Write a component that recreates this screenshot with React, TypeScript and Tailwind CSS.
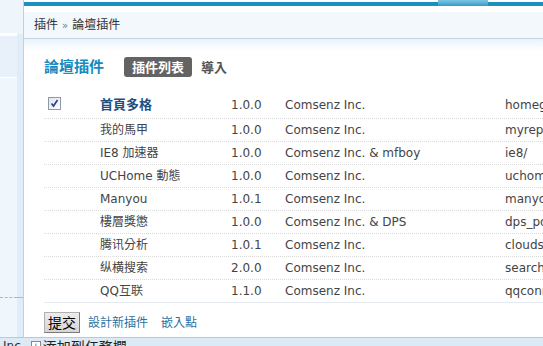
import React from "react";

const rows = [
  { name: "首頁多格", ver: "1.0.0", author: "Comsenz Inc.", dir: "homegrid/", first: true },
  { name: "我的馬甲", ver: "1.0.0", author: "Comsenz Inc.", dir: "myrepeats/" },
  { name: "IE8 加速器", ver: "1.0.0", author: "Comsenz Inc. & mfboy", dir: "ie8/" },
  { name: "UCHome 動態", ver: "1.0.0", author: "Comsenz Inc.", dir: "uchome/" },
  { name: "Manyou", ver: "1.0.1", author: "Comsenz Inc.", dir: "manyou/" },
  { name: "樓層獎懲", ver: "1.0.0", author: "Comsenz Inc. & DPS", dir: "dps_post/" },
  { name: "腾讯分析", ver: "1.0.1", author: "Comsenz Inc.", dir: "cloudstat/" },
  { name: "纵横搜索", ver: "2.0.0", author: "Comsenz Inc.", dir: "searchs/" },
  { name: "QQ互联", ver: "1.1.0", author: "Comsenz Inc.", dir: "qqconnect/", last: true },
];

export default function App() {
  return (
    <div className="w-[543px] h-[346px] overflow-hidden bg-white font-['DejaVu_Sans','Noto_Sans_CJK_TC',sans-serif] text-[12px] text-[#444]">
      <div className="flex h-[337px]">
        {/* sidebar */}
        <aside className="w-[24px] shrink-0 flex border-r border-[#bcd2e3]">
          <div className="w-[17px] flex flex-col bg-[#f0f7fc]">
            <div className="h-[33px] bg-[#eff6fb]" />
            <div className="h-[3px] bg-white" />
            <div className="h-[41px] bg-[#e8f1f9]" />
            <div className="h-[1px] bg-white" />
            <div className="h-[219px]" />
            <div className="h-[1px] border-t border-dashed border-[#b5b5b5]" />
            <div className="flex-1" />
          </div>
          <div className="w-[6px] flex flex-col bg-[#e0edf8]">
            <div className="h-[34px] bg-[#eef6fc]" />
            <div className="h-[263px]" />
            <div className="h-[1px] border-t border-dashed border-[#b5b5b5]" />
          </div>
        </aside>

        {/* main */}
        <main className="flex-1 flex flex-col min-w-0">
          <div className="h-[6px] flex items-end">
            <div className="flex-1 h-[4px] bg-[#1b8fbd]" />
            <div className="w-[50px] h-[6px] bg-gradient-to-b from-[#7cc6e3] to-[#2b9ccb]" />
            <div className="w-[55px] h-[4px] bg-[#1b8fbd]" />
          </div>
          <div className="h-[6px]" />
          <div className="h-[27px] bg-[#f2f8fc] border-b border-[#c5d4de] pl-[10px] flex items-center text-[#333]">
            插件 <span className="mx-[4px] text-[10px] text-[#777]">»</span> 論壇插件
          </div>
          <div className="h-[12px] bg-gradient-to-b from-[#eaf3f9] to-white" />

          <div className="pl-[20px]">
            <div className="mt-[6px] flex items-center h-[20px]">
              <span className="text-[15px] font-bold text-[#178bc0] leading-none">論壇插件</span>
              <span className="ml-[20px] h-[20px] px-[8px] rounded-[3px] bg-[#636363] text-white text-[13px] font-bold flex items-center leading-none">插件列表</span>
              <span className="ml-[9px] text-[13px] font-bold text-[#555] leading-none">導入</span>
            </div>

            <div className="mt-[14px]">
              {rows.map((r, i) => (
                <div
                  key={i}
                  className={
                    "grid grid-cols-[56px_131px_54px_220px_1fr] items-center whitespace-nowrap overflow-hidden " +
                    (r.first ? "h-[28px] " : "h-[23px] ") +
                    (r.last ? "border-b border-[#e4eaef]" : "border-b border-dotted border-[#dadada]")
                  }
                >
                  <div className="pl-[4px] flex items-center">
                    {r.first && (
                      <span className="w-[13px] h-[13px] border border-[#8e9aa6] bg-gradient-to-br from-[#dfe4ea] to-white flex items-center justify-center -mt-[3px]">
                        <svg width="9" height="9" viewBox="0 0 9 9">
                          <path d="M1.5 4.5 L3.5 7 L7.5 1" stroke="#2b3f9c" strokeWidth="1.7" fill="none" />
                        </svg>
                      </span>
                    )}
                  </div>
                  <div className={r.first ? "font-bold text-[#1d4f80] text-[13px]" : "text-[#444]"}>{r.name}</div>
                  <div>{r.ver}</div>
                  <div>{r.author}</div>
                  <div>{r.dir}</div>
                </div>
              ))}
            </div>

            <div className="mt-[9px] flex items-center">
              <button className="w-[36px] h-[21px] border border-[#7a7a7a] border-t-[#b0b0b0] border-l-[#b0b0b0] bg-gradient-to-b from-[#ececec] to-[#d6d6d6] text-[14px] text-black flex items-center justify-center leading-none">
                提交
              </button>
              <span className="ml-[8px] text-[#2b6f9e]">設計新插件</span>
              <span className="ml-[13px] text-[#2b6f9e]">嵌入點</span>
            </div>
          </div>
        </main>
      </div>

      <div className="h-[9px] border-t border-[#b4cadf] bg-[#dceaf6] flex items-start pt-[2px] overflow-hidden">
        <span className="ml-[3px] text-[12px] text-[#333] leading-none">Inc</span>
        <span className="ml-[10px] mt-[1px] w-[10px] h-[10px] border border-[#888] bg-white flex items-center justify-center text-[9px] leading-none text-[#555]">+</span>
        <span className="ml-[2px] text-[14px] text-[#222] leading-none">添加到任務欄</span>
      </div>
    </div>
  );
}
